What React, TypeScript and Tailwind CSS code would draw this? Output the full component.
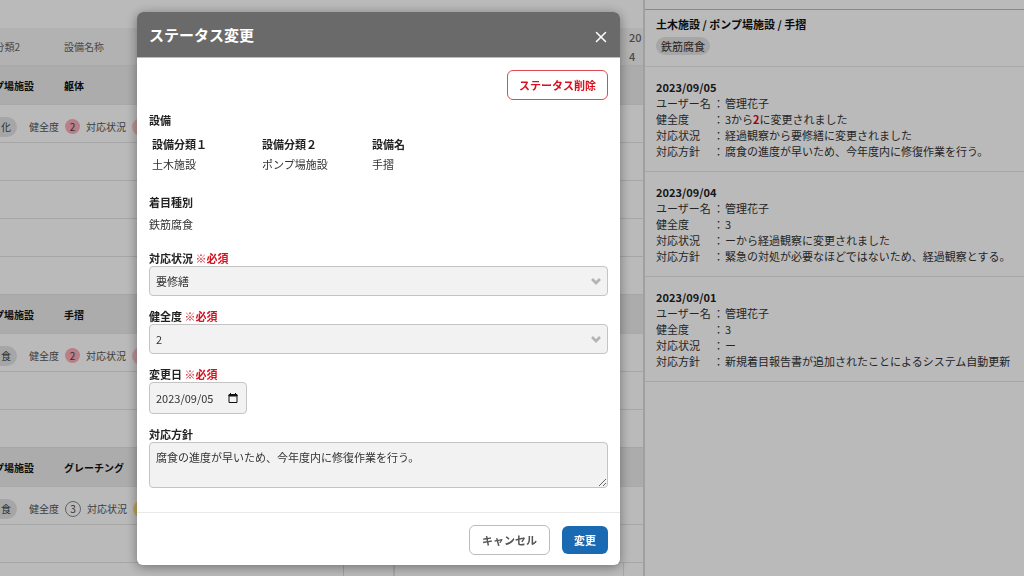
import { ChevronDown, X } from "lucide-react";
import type { ReactNode } from "react";

type Row =
  | { kind: "group"; category: string; name: string }
  | { kind: "status"; tag: string; level: number; tone: string }
  | { kind: "empty" };

const rows: Row[] = [
  { kind: "group", category: "プ場施設", name: "躯体" },
  { kind: "status", tag: "化", level: 2, tone: "bg-[#ffc9cf]" },
  { kind: "empty" },
  { kind: "empty" },
  { kind: "empty" },
  { kind: "empty" },
  { kind: "group", category: "プ場施設", name: "手摺" },
  { kind: "status", tag: "食", level: 2, tone: "bg-[#ffc9cf]" },
  { kind: "empty" },
  { kind: "empty" },
  { kind: "group", category: "プ場施設", name: "グレーチング" },
  { kind: "status", tag: "食", level: 3, tone: "bg-[#ffdf80]" },
  { kind: "empty" }
];

const history: { date: string; items: [string, ReactNode][] }[] = [
  {
    date: "2023/09/05",
    items: [
      ["ユーザー名", "管理花子"],
      [
        "健全度",
        <>
          3から<strong className="font-bold text-[#e60012]">2</strong>に変更されました
        </>
      ],
      ["対応状況", "経過観察から要修繕に変更されました"],
      ["対応方針", "腐食の進度が早いため、今年度内に修復作業を行う。"]
    ]
  },
  {
    date: "2023/09/04",
    items: [
      ["ユーザー名", "管理花子"],
      ["健全度", "3"],
      ["対応状況", "ーから経過観察に変更されました"],
      ["対応方針", "緊急の対処が必要なほどではないため、経過観察とする。"]
    ]
  },
  {
    date: "2023/09/01",
    items: [
      ["ユーザー名", "管理花子"],
      ["健全度", "3"],
      ["対応状況", "ー"],
      ["対応方針", "新規着目報告書が追加されたことによるシステム自動更新"]
    ]
  }
];

function EquipmentRow({ row }: { row: Row }) {
  if (row.kind === "group") {
    return (
      <div className="flex h-[39px] items-center border-b border-[#e8e8e8] bg-[#ececec] pt-0.5 font-bold text-[#111]">
        <div className="flex w-[34px] justify-end overflow-hidden whitespace-nowrap">{row.category}</div>
        <div className="ml-[30px]">{row.name}</div>
      </div>
    );
  }
  if (row.kind === "status") {
    return (
      <div className="flex h-[38px] items-center border-b border-[#e4e4e4] pt-1.5 text-[#555]">
        <span className="flex h-5 w-[17px] items-center justify-end rounded-r-full bg-[#e4e4e4] pr-1.5 text-[#444]">
          {row.tag}
        </span>
        <span className="ml-3">健全度</span>
        {row.level === 2 ? (
          <span className="mx-1.5 flex size-[15px] items-center justify-center rounded-full bg-[#fcaebb] text-[#444]">2</span>
        ) : (
          <span className="mx-1.5 flex size-4 items-center justify-center rounded-full border border-[#888] text-[#444]">
            {row.level}
          </span>
        )}
        <span>対応状況</span>
        <span className={`ml-1.5 h-[18px] w-12 rounded-full ${row.tone}`} />
      </div>
    );
  }
  return <div className="h-[38px] border-b border-[#e4e4e4]" />;
}

function EquipmentList() {
  return (
    <main className="min-w-0 flex-1 overflow-hidden pt-7 text-[10px] leading-4">
      <div className="flex h-[38px] items-center border-b border-[#e8e8e8] bg-[#f4f4f4] text-[#666]">
        <div className="flex w-5 justify-end overflow-hidden whitespace-nowrap">分類2</div>
        <div className="ml-11 flex-1">設備名称</div>
        <div className="w-3.5 text-[11px] leading-[19px] font-medium">
          20
          <br />4
        </div>
      </div>
      {rows.map((row, index) => (
        <EquipmentRow row={row} key={index} />
      ))}
      <div className="flex h-[38px]">
        <div className="w-[344px] border-r border-[#dcdcdc]" />
        <div className="w-[51px] border-r-2 border-[#e4e4e4]" />
        <div className="flex-1" />
        <div className="w-5 border-l border-[#e4e4e4]" />
      </div>
    </main>
  );
}

function HistoryPanel() {
  return (
    <aside className="w-[381px] shrink-0 border-l-2 border-[#dcdcdc] pt-[9px] text-[11px] leading-4 text-[#333]">
      <header className="border-t border-b border-t-[#bbb] border-b-[#e8e8e8] px-[11px] pt-1.5 pb-[11px]">
        <h2 className="font-bold text-[#111]">土木施設 / ポンプ場施設 / 手摺</h2>
        <span className="mt-[5px] inline-flex h-[18px] items-center rounded-full bg-[#e4e4e4] px-[5px]">鉄筋腐食</span>
      </header>
      {history.map((entry) => (
        <section className="border-b border-[#e4e4e4] px-[11px] py-3" key={entry.date}>
          <h3 className="font-bold text-[#222]">{entry.date}</h3>
          <dl>
            {entry.items.map(([label, value]) => (
              <div className="flex whitespace-nowrap" key={label}>
                <dt className="flex w-[69px] shrink-0 justify-between pr-px">
                  {label}
                  <span>：</span>
                </dt>
                <dd>{value}</dd>
              </div>
            ))}
          </dl>
        </section>
      ))}
    </aside>
  );
}

function FieldLabel({ id, text, required }: { id: string; text: string; required?: boolean }) {
  return (
    <label htmlFor={id} className="block font-bold text-[#222]">
      {text}
      {required && <span className="text-[#d7101e]"> ※必須</span>}
    </label>
  );
}

function SelectField({ id, label, options }: { id: string; label: string; options: string[] }) {
  return (
    <div>
      <FieldLabel id={id} text={label} required />
      <div className="relative">
        <select
          id={id}
          className="h-[30px] w-full appearance-none rounded-sm border border-[#c4c4c4] bg-[#f2f2f2] px-1.5 text-[#333]"
        >
          {options.map((option) => (
            <option key={option}>{option}</option>
          ))}
        </select>
        <ChevronDown
          className="pointer-events-none absolute top-1/2 right-1 size-4 -translate-y-1/2 text-[#b4b4b4]"
          strokeWidth={4}
          strokeLinecap="butt"
          strokeLinejoin="miter"
        />
      </div>
    </div>
  );
}

function StatusDialog() {
  return (
    <div
      role="dialog"
      aria-labelledby="dialog-title"
      className="w-full overflow-hidden rounded-md bg-white text-[11px] leading-4 text-[#333] shadow-[0_2px_12px_rgba(0,0,0,0.4)]"
    >
      <header className="flex h-[46px] items-center justify-between border-b border-[#bbb] bg-[#6a6a6a] px-3 text-white">
        <h1 id="dialog-title" className="text-[15px] leading-5 font-bold">
          ステータス変更
        </h1>
        <button type="button" aria-label="閉じる" className="-mr-0.5 pt-1">
          <X className="size-[18px]" strokeWidth={2} />
        </button>
      </header>

      <div className="px-3 pt-3 pb-6">
        <button
          type="button"
          className="ml-auto block h-[30px] rounded-md border border-[#dc4a54] px-[11px] font-bold text-[#d7101e]"
        >
          ステータス削除
        </button>

        <h2 className="mt-3 font-bold text-[#222]">設備</h2>
        <table className="mt-2 ml-[3px] table-fixed text-left">
          <thead>
            <tr className="h-[18px] align-top text-[#222]">
              <th className="w-[110px]">設備分類１</th>
              <th className="w-[110px]">設備分類２</th>
              <th className="w-[110px]">設備名</th>
            </tr>
          </thead>
          <tbody>
            <tr>
              <td className="pt-0.5">土木施設</td>
              <td className="pt-0.5">ポンプ場施設</td>
              <td className="pt-0.5">手摺</td>
            </tr>
          </tbody>
        </table>

        <h2 className="mt-[22px] font-bold text-[#222]">着目種別</h2>
        <p className="mt-1.5">鉄筋腐食</p>

        <div className="mt-[18px] flex flex-col gap-3">
          <SelectField id="status" label="対応状況" options={["要修繕", "経過観察"]} />
          <SelectField id="level" label="健全度" options={["2", "3"]} />
          <div>
            <FieldLabel id="changed-on" text="変更日" required />
            <div className="flex h-8 w-[98px] items-center justify-between rounded-sm border border-[#c4c4c4] bg-[#f2f2f2] pr-2 pl-1.5">
              <input id="changed-on" type="text" defaultValue="2023/09/05" className="w-16 text-[#333] outline-none" />
              <button type="button" aria-label="日付を選択" className="text-[#111]">
                <svg viewBox="0 0 10 10" className="size-2.5" fill="none" stroke="currentColor">
                  <path d="M1 1.5h8v8H1z" />
                  <path d="M1 2h8v1H1z" fill="currentColor" />
                  <path d="M2.5 0v1.5M7.5 0v1.5" />
                </svg>
              </button>
            </div>
          </div>
          <div>
            <FieldLabel id="policy" text="対応方針" />
            <textarea
              id="policy"
              defaultValue="腐食の進度が早いため、今年度内に修復作業を行う。"
              className="block h-[46px] w-full resize rounded-sm border border-[#c4c4c4] bg-[#f2f2f2] px-1.5 py-1.5 text-[#333]"
            />
          </div>
        </div>
      </div>

      <footer className="flex items-center justify-end gap-3 border-t border-[#e8e8e8] px-3 pt-3 pb-2.5">
        <button type="button" className="h-[30px] rounded-md border border-[#bbb] px-3 font-bold text-[#555]">
          キャンセル
        </button>
        <button type="submit" className="h-7 rounded-md bg-[#1a6ab3] px-3 font-bold text-white">
          変更
        </button>
      </footer>
    </div>
  );
}

export default function App() {
  return (
    <div className="h-screen overflow-hidden bg-white font-['Noto_Sans_CJK_JP',sans-serif]">
      <div className="flex h-full">
        <EquipmentList />
        <HistoryPanel />
      </div>
      <div className="fixed inset-0 bg-black/27 pt-3 pr-[404px] pl-[137px]">
        <StatusDialog />
      </div>
    </div>
  );
}
